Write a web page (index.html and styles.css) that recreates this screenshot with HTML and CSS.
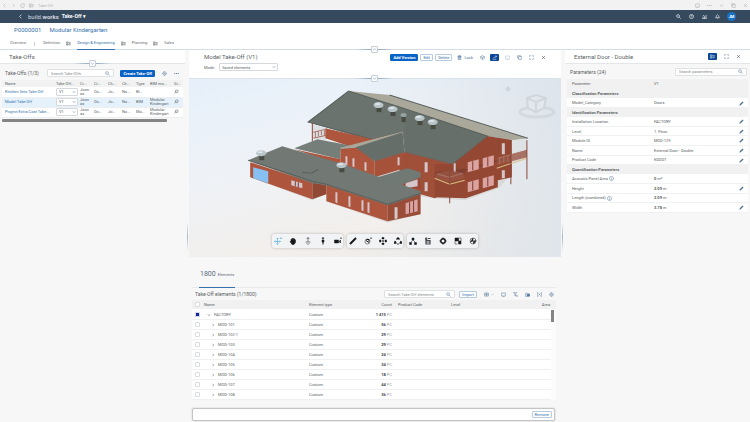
FILE: index.html
```html
<!DOCTYPE html>
<html lang="en">
<head>
    <meta charset="UTF-8">
    <meta name="viewport" content="width=device-width, initial-scale=1.0">
    <title>Take-Off</title>
    <link rel="stylesheet" href="styles.css">
</head>
<body>
    <svg class="sprite" aria-hidden="true">
        <symbol id="i-search" viewBox="0 0 16 16"><circle cx="6.500" cy="6.500" r="4.500"/><path d="M10 10l5 5"/></symbol>
        <symbol id="i-down" viewBox="0 0 16 16"><path d="M3 5l5 6 5-6"/></symbol>
        <symbol id="i-up" viewBox="0 0 16 16"><path d="M3 11l5-6 5 6"/></symbol>
        <symbol id="i-left" viewBox="0 0 16 16"><path d="M11 2L5 8l6 6"/></symbol>
        <symbol id="i-right" viewBox="0 0 16 16"><path d="M6 3l5 5-5 5"/></symbol>
        <symbol id="i-close" viewBox="0 0 16 16"><path d="M3 3l10 10M13 3L3 13"/></symbol>
        <symbol id="i-gear" viewBox="0 0 16 16"><circle cx="8" cy="8" r="5.500"/><circle cx="8" cy="8" r="2"/><path d="M8 1v2M8 13v2M1 8h2M13 8h2"/></symbol>
        <symbol id="i-more" viewBox="0 0 16 16"><path d="M1 8h3M6.500 8h3M12 8h3" stroke-width="3"/></symbol>
        <symbol id="i-help" viewBox="0 0 16 16"><circle cx="8" cy="8" r="6.500"/><path d="M6 6q2-3 4 0q0 1-2 3M8 11v1"/></symbol>
        <symbol id="i-chart" viewBox="0 0 16 16"><path d="M3 9v5M8 7v7M13 3v11M1 14h14M3 6l4-2"/></symbol>
        <symbol id="i-bell" viewBox="0 0 16 16"><path d="M2 12h12l-2-3V6q-4-7-8 0v3zM7 14h2"/></symbol>
        <symbol id="i-pencil" viewBox="0 0 16 16"><path d="M3 13L13 3" stroke-width="4"/><path d="M1 15l3-1"/></symbol>
        <symbol id="i-pin" viewBox="0 0 16 16"><path d="M2 14l4-5M4 7l5 5 2-1v-2l3-3-4-4-3 3H5z"/></symbol>
        <symbol id="i-trash" viewBox="0 0 16 16"><path d="M4 4h8v10H4zM2 4h12M6 2h4M7 7v4M9 7v4"/></symbol>
        <symbol id="i-cube" viewBox="0 0 16 16"><path d="M2 5l6-3 6 3v6l-6 3-6-3zM2 5l6 3 6-3M8 8v6"/></symbol>
        <symbol id="i-screen" viewBox="0 0 16 16"><path d="M2 3h12v10H2zM5 15h6"/></symbol>
        <symbol id="i-copy" viewBox="0 0 16 16"><path d="M5 5h9v9H5zM5 10H2V2h9v3"/></symbol>
        <symbol id="i-full" viewBox="0 0 16 16"><path d="M2 6V2h4M10 2h4v4M14 10v4h-4M6 14H2v-4"/></symbol>
        <symbol id="i-link" viewBox="0 0 16 16"><path d="M2 14h12M3 11l4-4 3 2 4-6M10 3h4v4"/></symbol>
        <symbol id="i-list" viewBox="0 0 16 16"><path d="M1 3h6v4H1zM1 10h6v3H1zM9 5h6M9 9h6M9 12h6"/></symbol>
        <symbol id="i-grid" viewBox="0 0 16 16"><path d="M2 3h12v10H2zM2 8h12M8 3v10"/></symbol>
        <symbol id="i-filter" viewBox="0 0 16 16"><path d="M1 2h11L8 7v6l-2-2V7zM10 10l5 5M15 10l-5 5"/></symbol>
        <symbol id="i-export" viewBox="0 0 16 16"><path d="M2 4h5l2 2h5v8H2z"/><path d="M7 7h7v6H7z" fill="currentColor"/></symbol>
        <symbol id="i-sum" viewBox="0 0 16 16"><path d="M4 2H1v12h3M12 2h3v12h-3M5 5l6 6M11 5l-6 6"/></symbol>
        <symbol id="i-info" viewBox="0 0 16 16"><circle cx="8" cy="8" r="6.500"/><path d="M8 7v5M8 4v1"/></symbol>
        <symbol id="i-reload" viewBox="0 0 16 16"><path d="M14 8a6 6 0 1 1-2-4l2 2V2"/></symbol>
        <symbol id="i-orbit" viewBox="0 0 16 16"><path d="M7 2v13M1 9h12M5 4l2-2 2 2M5 13l2 2 2-2M3 7L1 9l2 2M11 7l2 2-2 2"/><path d="M14 1v3" stroke-width="2"/></symbol>
        <symbol id="i-hand" viewBox="0 0 16 16"><path d="M4 8V4l2 2V2l2 3V2l2 3V3l3 3v5l-3 4H6L2 9z" fill="currentColor"/></symbol>
        <symbol id="i-updown" viewBox="0 0 16 16"><path d="M8 1v9M5 4l3-3 3 3M3 10h10M5 12l3 3 3-3"/></symbol>
        <symbol id="i-walk" viewBox="0 0 16 16"><circle cx="8" cy="2.500" r="1.500" fill="currentColor"/><path d="M8 5v6M6 6h4v4H6zM7 10v5M9 10v5" fill="currentColor"/></symbol>
        <symbol id="i-camera" viewBox="0 0 16 16"><path d="M1 6h8v6H1zM10 9l3-3v6z" fill="currentColor"/><path d="M14 1v3" stroke-width="2"/></symbol>
        <symbol id="i-ruler" viewBox="0 0 16 16"><path d="M2 14L14 2" stroke-width="4"/></symbol>
        <symbol id="i-paint" viewBox="0 0 16 16"><circle cx="7" cy="9" r="5"/><path d="M4 7l6 4M5 5h5v4" stroke-width="2"/><path d="M14 1v3" stroke-width="2"/></symbol>
        <symbol id="i-explode" viewBox="0 0 16 16"><path d="M6 1h4v3H6zM6 12h4v3H6zM1 6h3v4H1zM12 6h3v4h-3zM7 7h2v2H7z" fill="currentColor"/></symbol>
        <symbol id="i-section" viewBox="0 0 16 16"><path d="M5 5l3-3 3 3M3 8l-2 4h4M13 8l2 4h-4M7 14h2" stroke-width="3"/></symbol>
        <symbol id="i-tree" viewBox="0 0 16 16"><path d="M6 2h4v4H6zM1 11h4v4H1zM11 11h4v4h-4z" fill="currentColor"/><path d="M8 6l-5 5M8 6l5 5"/></symbol>
        <symbol id="i-levels" viewBox="0 0 16 16"><path d="M3 2h3v3H3zM8 3h5M3 7h10M3 10h10M3 14h10M4 7v7M12 7v7" stroke-width="1.500"/></symbol>
        <symbol id="i-cog" viewBox="0 0 16 16"><circle cx="8" cy="8" r="4.500" stroke-width="3"/><path d="M8 1v2M8 13v2M1 8h2M13 8h2" stroke-width="2"/></symbol>
        <symbol id="i-boxes" viewBox="0 0 16 16"><path d="M2 2h7v6H2zM9 8h5v6H9z" fill="currentColor"/><path d="M9 2h5v6M7 14H2V8"/></symbol>
        <symbol id="i-globe" viewBox="0 0 16 16"><circle cx="8" cy="8" r="6"/><path d="M8 2L3 10l5-2zM9 8l5-1-5 7z" fill="currentColor"/></symbol>
    </svg>

    <div class="browser-bar">
        <svg><use href="#i-left"/></svg>
        <svg><use href="#i-right"/></svg>
        <svg><use href="#i-reload"/></svg>
        <svg><use href="#i-list"/></svg>
        <span>Take-Off</span>
        <div class="window-icons">
            <svg><use href="#i-screen"/></svg>
            <svg><use href="#i-more"/></svg>
            <svg><use href="#i-down"/></svg>
            <svg><use href="#i-copy"/></svg>
            <svg><use href="#i-close"/></svg>
        </div>
    </div>

    <header class="shell">
        <button class="icon" aria-label="Back"><svg><use href="#i-left"/></svg></button>
        <span class="brand">build.<b>works</b></span>
        <button class="app-name">Take-Off <span>▾</span></button>
        <div class="shell-icons">
            <button class="icon" aria-label="Search"><svg><use href="#i-search"/></svg></button>
            <button class="icon" aria-label="Help"><svg><use href="#i-help"/></svg></button>
            <button class="icon" aria-label="Reports"><svg><use href="#i-chart"/></svg></button>
            <button class="icon" aria-label="Notifications"><svg><use href="#i-bell"/></svg></button>
            <button class="avatar">JM</button>
        </div>
    </header>

    <div class="project">
        <h1><a href="#">P0000001</a><a href="#">Modular Kindergarten</a></h1>
        <nav>
            <a href="#">Overview</a>
            <i></i>
            <a href="#">Definition</a>
            <svg><use href="#i-list"/></svg>
            <a href="#" class="active">Design &amp; Engineering</a>
            <svg><use href="#i-list"/></svg>
            <a href="#">Planning</a>
            <svg><use href="#i-list"/></svg>
            <a href="#">Sales</a>
        </nav>
        <button class="fold" aria-label="Collapse header"><svg><use href="#i-up"/></svg></button>
    </div>

    <main>
        <section class="takeoffs">
            <div class="panel-head">
                <h2>Take-Offs</h2>
                <button class="fold" aria-label="Expand"><svg><use href="#i-down"/></svg></button>
            </div>
            <div class="toolbar">
                <h3>Take-Offs (1/3)</h3>
                <label class="search"><input type="text" placeholder="Search Take-Offs" aria-label="Search Take-Offs"><svg><use href="#i-search"/></svg></label>
                <button class="btn primary">Create Take-Off</button>
                <button class="icon" aria-label="Settings"><svg><use href="#i-gear"/></svg></button>
                <button class="icon" aria-label="More"><svg><use href="#i-more"/></svg></button>
            </div>
            <table class="takeoff-table">
                <thead>
                    <tr><th class="c-name">Name</th><th class="c-version">Take-Off…</th><th>Cr…</th><th>Cr…</th><th>Ch…</th><th>Ch…</th><th>Type</th><th class="c-model">BIM mo…</th><th class="c-pin">St…</th></tr>
                </thead>
                <tbody>
                    <tr>
                        <td><a href="#">Kitchen Sets Take-Off</a></td>
                        <td><span class="drop"><select aria-label="Version"><option>V1</option></select><svg><use href="#i-down"/></svg></span></td>
                        <td>Joon as</td><td>Oc…</td><td>Jo…</td><td>No…</td><td>BI…</td><td></td>
                        <td><svg><use href="#i-pin"/></svg></td>
                    </tr>
                    <tr class="selected">
                        <td><a href="#">Model Take-Off</a></td>
                        <td><span class="drop"><select aria-label="Version"><option>V1</option></select><svg><use href="#i-down"/></svg></span></td>
                        <td>Joon as</td><td>Oc…</td><td>Jo…</td><td>No…</td><td>BIM</td><td>Modular Kindergart</td>
                        <td><svg><use href="#i-pin"/></svg></td>
                    </tr>
                    <tr>
                        <td><a href="#">Project Extra Cost Take…</a></td>
                        <td><span class="drop"><select aria-label="Version"><option>V1</option></select><svg><use href="#i-down"/></svg></span></td>
                        <td>Joon as</td><td>Oc…</td><td>Jo…</td><td>No…</td><td>Ma…</td><td>Modular Kindergart</td>
                        <td><svg><use href="#i-pin"/></svg></td>
                    </tr>
                </tbody>
            </table>
            <div class="hscroll"></div>
        </section>

        <section class="model">
            <div class="model-head">
                <div class="title-row">
                    <h2>Model Take-Off (V1)</h2>
                    <div class="actions">
                        <button class="btn primary">Add Version</button>
                        <button class="btn">Edit</button>
                        <button class="btn">Delete</button>
                        <button class="lock"><svg><use href="#i-trash"/></svg> Lock</button>
                        <button class="icon" aria-label="Model"><svg><use href="#i-cube"/></svg></button>
                        <button class="icon on" aria-label="Link"><svg><use href="#i-link"/></svg></button>
                        <button class="icon pale" aria-label="Screen"><svg><use href="#i-screen"/></svg></button>
                        <button class="icon" aria-label="Copy"><svg><use href="#i-copy"/></svg></button>
                        <button class="icon" aria-label="Full screen"><svg><use href="#i-full"/></svg></button>
                        <button class="icon dark" aria-label="Close"><svg><use href="#i-close"/></svg></button>
                    </div>
                </div>
                <div class="mode-row">
                    <label for="mode">Mode:</label>
                    <span class="drop"><select id="mode"><option>Saved elements</option></select><svg><use href="#i-down"/></svg></span>
                </div>
                <button class="fold" aria-label="Expand"><svg><use href="#i-down"/></svg></button>
            </div>

            <div class="viewer">
                <svg class="building" viewBox="190 79 371 178" preserveAspectRatio="xMidYMid meet">
                    <!-- ground shadow -->
                    <path class="shade" d="M251 177l62 23 14-7v8l61 21 32-8v-18l15 2 30 2 34-12 14-16-100-20-160 10z"/>

                    <!-- main roof -->
                    <path fill="#aaa89b" d="M349 91l41 4 138 43-16 1-25-2-87-29z"/>
                    <path fill="#6a736e" d="M349 91l51 16 88 29-35 28-48-12-2-20-32 8-63-18z"/>
                    <path fill="#5f6762" d="M405 112v40l48 12 35-28-84-27z" opacity=".3"/>
                    <path class="edge" d="M349 91l-40 31 64 17M349 91l51 16 88 29-35 28-48-12M390 95l138 43"/>

                    <!-- upper left balcony -->
                    <path fill="#dde1e5" d="M313 124l14 4v12l-14-2z"/>
                    <path class="rail" d="M314 132l13-3M314 138l13-3M316 132v5M319 131v5M322 130v5M325 130v5"/>
                    <path class="post" d="M313 123v18"/>
                    <path fill="#ad563d" d="M326 128l47 11 30-7-50 15-27-9z"/>

                    <!-- middle flat roof -->
                    <path fill="#767e79" d="M295 148l23-9 37 7-14 4v9z"/>
                    <path fill="#ad563d" d="M295 149l46 10v6z"/>

                    <!-- small gable -->
                    <path fill="#ad563d" d="M341 149l17-3 17 15v16l-34-13z"/>
                    <path fill="#a6523b" d="M375 160l30-9v17l-30 9z"/>
                    <path fill="#aaa89b" d="M341 148l62-16-47 15z" stroke="#aaa89b" stroke-width="1"/>
                    <path fill="#666e69" d="M356 147l47-15 2 20-30 9z"/>
                    <path class="glass" d="M346 156h2v9l-2-1zM353 158h2v9l-2-1zM365 162h2v9l-2-1zM398 157h2v8h-2z"/>

                    <!-- courtyard wall and roof -->
                    <path fill="#a04f39" d="M405 152l48 12 1 26-19 8-35-10v-20z"/>
                    <path fill="#717974" d="M378 177l30-9 13 4v12l-14 4z"/>
                    <path fill="#984a36" d="M403 184l18-7v12l-16-3z"/>
                    <path class="glass" d="M406 183l12-4v7l-12 2zM425 162h3v10h-3zM425 182h3v9h-3zM441 165h3v10h-3z"/>

                    <!-- right wing -->
                    <path fill="#944733" d="M453 164l35-28 24 3v38l-14 3v7l-32 11-31-1v-33z"/>
                    <path fill="#aaa89b" d="M488 136l24 2 16 0-16 2z"/>
                    <path class="belt" d="M465 170l47-14"/>
                    <path fill="#80402f" d="M435 172l30-4v6l-30 4z"/>
                    <path class="glass pink" d="M468 162l11-3v10l-11 3zM483 158l11-3v10l-11 3zM468 182l11-3v10l-11 3zM483 178l11-3v10l-11 3z"/>
                    <path class="glass" d="M502 143h3v11h-3zM454 163h2v9h-2zM502 170h3v8h-3z"/>
                    <path class="frame" d="M473 161v9M488 157v9M473 181v9M488 177v9"/>
                    <path fill="#dfe2e5" d="M512 140l15-1v20l-15 3z"/>
                    <path fill="#9a5544" d="M497 158l30-8v7l-30 8zM435 177l15 5 14-4v-5l-14-3-14 3z" opacity=".8"/>
                    <path class="rail" d="M498 158l29-8M500 158v6M504 157v6M508 156v6M512 155v6M516 154v6M520 153v6M524 152v6M438 174l12 3 13-4"/>
                    <path class="deck" d="M497 168l30-10M435 178l15 6 15-4"/>
                    <path class="post" d="M450 164v39M511 140v44M527 140v39"/>

                    <!-- front block -->
                    <path fill="#ad563d" d="M251 162l62 20v17l-62-22z"/>
                    <path fill="#914835" d="M313 181l14 4v9l-14 5z"/>
                    <path fill="#ad563d" d="M327 184l61 20v17l-61-20z"/>
                    <path fill="#994c37" d="M388 204l33-12v22l-33 7z"/>
                    <path fill="#727975" d="M249 160l34-14 58 17 37 13 43 15v3l-33 11-61-20-14-2z"/>
                    <path class="edge" d="M249 160l64 21 14 3 61 20 33-11M303 172l9 1 7-4"/>
                    <path fill="#87c0f2" d="M254 167l15 4v12l-15-5z"/>
                    <path class="glass" d="M292 180l11 3v5l-11-3zM336 192h2v11l-2-1zM349 196h2v11l-2-1zM362 200h2v11l-2-1zM368 202h2v11l-2-1zM395 207h3v11l-3 1z"/>
                    <path class="glass pink" d="M406 203l12-4v12l-12 3z"/>
                    <path class="frame" d="M296 181v5M299 182v5M410 202v11M414 200v12"/>

                    <!-- roof vents -->
                    <g id="vent"><path fill="#484b42" d="M377 106h5v6h-5z"/><ellipse cx="379" cy="105" rx="5" ry="3" fill="#b9c4c9"/><ellipse cx="378" cy="104" rx="3" ry="1" fill="#dfe6ea"/></g>
                    <use href="#vent" x="14" y="4"/>
                    <use href="#vent" x="41" y="13"/>
                    <use href="#vent" x="54" y="17"/>
                    <use href="#vent" x="-117" y="48"/>
                    <use href="#vent" x="-37" y="60"/>
                    <path fill="#484b42" d="M402 116h4v6h-4z"/><ellipse cx="404" cy="115" rx="3" ry="2" fill="#97a3a3"/>

                    <!-- view cube -->
                    <ellipse cx="537" cy="112" rx="17" ry="5" fill="none" stroke="#d3d9df" stroke-width="3"/>
                    <path fill="#e4e8ec" stroke="#d0d6dc" d="M527 98l9-3 10 3-2 10-8 4-8-4zM527 98l9 4 10-4M536 102v9"/>
                    <path d="M508 86l3 3-3 3-3-3z" fill="#ced6dd"/>
                </svg>
                <div class="viewer-tools">
                    <div class="tool-group">
                        <button class="icon current" aria-label="Orbit"><svg><use href="#i-orbit"/></svg></button>
                        <button class="icon" aria-label="Pan"><svg><use href="#i-hand"/></svg></button>
                        <button class="icon" aria-label="Zoom"><svg><use href="#i-updown"/></svg></button>
                        <button class="icon" aria-label="First person"><svg><use href="#i-walk"/></svg></button>
                        <button class="icon" aria-label="Camera"><svg><use href="#i-camera"/></svg></button>
                    </div>
                    <div class="tool-group">
                        <button class="icon" aria-label="Measure"><svg><use href="#i-ruler"/></svg></button>
                        <button class="icon" aria-label="Section"><svg><use href="#i-paint"/></svg></button>
                        <button class="icon" aria-label="Explode"><svg><use href="#i-explode"/></svg></button>
                        <button class="icon" aria-label="Reset"><svg><use href="#i-section"/></svg></button>
                    </div>
                    <div class="tool-group">
                        <button class="icon" aria-label="Model browser"><svg><use href="#i-tree"/></svg></button>
                        <button class="icon" aria-label="Levels"><svg><use href="#i-levels"/></svg></button>
                        <button class="icon" aria-label="Settings"><svg><use href="#i-cog"/></svg></button>
                        <button class="icon" aria-label="Boxes"><svg><use href="#i-boxes"/></svg></button>
                        <button class="icon" aria-label="Globe"><svg><use href="#i-globe"/></svg></button>
                    </div>
                </div>
            </div>

            <div class="elements">
                <div class="tab-row"><a href="#"><b>1800</b> Elements</a></div>
                <div class="toolbar">
                    <h3>Take-Off elements (1/1800)</h3>
                    <label class="search"><input type="text" placeholder="Search Take-Off elements" aria-label="Search elements"><svg><use href="#i-search"/></svg></label>
                    <button class="btn">Import</button>
                    <div class="table-icons">
                        <button class="icon split" aria-label="View"><svg><use href="#i-grid"/></svg><svg><use href="#i-down"/></svg></button>
                        <button class="icon" aria-label="Screen"><svg><use href="#i-screen"/></svg></button>
                        <button class="icon" aria-label="Clear filter"><svg><use href="#i-filter"/></svg></button>
                        <button class="icon" aria-label="Export"><svg><use href="#i-export"/></svg></button>
                        <button class="icon" aria-label="Totals"><svg><use href="#i-sum"/></svg></button>
                        <button class="icon" aria-label="Settings"><svg><use href="#i-gear"/></svg></button>
                    </div>
                </div>
                <div class="table-wrap">
                    <table class="element-table">
                        <thead>
                            <tr><th class="c-check"><input type="checkbox" aria-label="Select all"></th><th class="c-name">Name</th><th class="c-type">Element type</th><th class="c-count">Count</th><th class="c-code">Product Code</th><th>Level</th><th class="c-area">Area</th></tr>
                        </thead>
                        <tbody id="rows"></tbody>
                    </table>
                    <div class="vscroll"><i></i></div>
                </div>
                <footer><button class="btn">Remove</button></footer>
            </div>
        </section>

        <section class="details">
            <div class="panel-head">
                <h2>External Door - Double</h2>
                <div class="actions">
                    <button class="icon on" aria-label="Details"><svg><use href="#i-list"/></svg></button>
                    <button class="icon" aria-label="Full screen"><svg><use href="#i-full"/></svg></button>
                    <button class="icon dark" aria-label="Close"><svg><use href="#i-close"/></svg></button>
                </div>
            </div>
            <div class="toolbar">
                <h3>Parameters (24)</h3>
                <label class="search"><input type="text" placeholder="Search parameters" aria-label="Search parameters"><svg><use href="#i-search"/></svg></label>
            </div>
            <table class="param-table">
                <thead><tr><th class="c-param">Parameter</th><th>V1</th><th class="c-edit"></th></tr></thead>
                <tbody>
                    <tr class="group"><th colspan="3">Classification Parameters</th></tr>
                    <tr><td>Model_Category</td><td>Doors</td><td><svg><use href="#i-pencil"/></svg></td></tr>
                    <tr class="group"><th colspan="3">Identification Parameters</th></tr>
                    <tr><td>Installation Location</td><td>FACTORY</td><td><svg><use href="#i-pencil"/></svg></td></tr>
                    <tr><td>Level</td><td>1. Floor</td><td><svg><use href="#i-pencil"/></svg></td></tr>
                    <tr><td>Module ID</td><td>MOD-129</td><td><svg><use href="#i-pencil"/></svg></td></tr>
                    <tr><td>Name</td><td>External Door - Double</td><td><svg><use href="#i-pencil"/></svg></td></tr>
                    <tr><td>Product Code</td><td>EDDDT</td><td><svg><use href="#i-pencil"/></svg></td></tr>
                    <tr class="group"><th colspan="3">Quantification Parameters</th></tr>
                    <tr><td>Acoustic Panel Area <svg><use href="#i-info"/></svg></td><td><b>0</b> m²</td><td></td></tr>
                    <tr><td>Height</td><td><b>2.09</b> m</td><td><svg><use href="#i-pencil"/></svg></td></tr>
                    <tr><td>Length (combined) <svg><use href="#i-info"/></svg></td><td><b>2.09</b> m</td><td></td></tr>
                    <tr><td>Width</td><td><b>3.78</b> m</td><td><svg><use href="#i-pencil"/></svg></td></tr>
                </tbody>
            </table>
        </section>
    </main>
    <script src="script.js"></script>
</body>
</html>
```
FILE: styles.css
```css
* {
    box-sizing: border-box;
}
body {
    margin: 0;
    min-height: 100vh;
    display: flex;
    flex-direction: column;
    background: #f7f7f7;
    color: #5a5f64;
    font-family: Roboto, "Liberation Sans", sans-serif;
    font-size: 4px;
    line-height: 5px;
}
.sprite {
    position: absolute;
    width: 0;
    height: 0;
}
svg {
    width: 5px;
    height: 5px;
    fill: none;
    stroke: currentColor;
    stroke-width: 2;
    flex: none;
}
h1, h2, h3 {
    margin: 0;
    font-weight: normal;
}
h2 {
    font-size: 6px;
    line-height: 8px;
}
h3 {
    font-size: 5px;
    line-height: 6px;
}
a {
    color: #3572ab;
    text-decoration: none;
}
button, input, select {
    font: inherit;
    color: inherit;
    margin: 0;
    padding: 0;
    border: none;
    background: none;
}

/* top bars */
.browser-bar {
    height: 10px;
    display: flex;
    align-items: center;
    gap: 4px;
    padding: 0 2px;
    background: #f2f2f2;
    color: #b5b5b5;
}
.window-icons {
    margin-left: auto;
    display: flex;
    gap: 7px;
}
.shell {
    height: 13px;
    display: flex;
    align-items: center;
    padding: 0 14px 0 17px;
    background: #354a5f;
    color: white;
}
.brand {
    margin: 0 3px 0 5px;
    font-size: 6px;
    color: #d5dae0;
}
.app-name {
    font-size: 5px;
    font-weight: bold;
}
.shell-icons {
    margin-left: auto;
    display: flex;
    align-items: center;
    gap: 7px;
}
.avatar {
    width: 9px;
    height: 9px;
    border-radius: 50%;
    background: #1b72c4;
    font-weight: bold;
}
.icon {
    display: flex;
    align-items: center;
    justify-content: center;
    width: 6px;
    height: 7px;
    cursor: pointer;
}
.icon svg {
    stroke-width: 1.5;
}
.shell .icon svg {
    stroke-width: 2;
}

/* project header */
.project {
    position: relative;
    height: 27px;
    background: white;
    border-bottom: 1px solid #d5dde4;
}
.project h1 {
    display: flex;
    gap: 8px;
    padding: 3px 14px;
    font-size: 6px;
    line-height: 8px;
}
.project nav {
    display: flex;
    align-items: center;
    gap: 6px;
    height: 13px;
    padding-left: 10px;
    color: #6a6f73;
}
.project nav a {
    line-height: 12px;
    color: #6a6f73;
    border-bottom: 1px solid transparent;
}
.project nav i {
    height: 4px;
    margin: 0 2px;
    border-left: 1px solid #ccc;
}
.project nav a.active {
    color: #3572ab;
    border-color: #3572ab;
}
.fold {
    position: absolute;
    left: 50%;
    bottom: -4px;
    z-index: 2;
    width: 7px;
    height: 7px;
    margin-left: -4px;
    display: flex;
    align-items: center;
    justify-content: center;
    background: white;
    border: 1px solid #c5ced6;
    border-radius: 1px;
    color: #8ba3ba;
}
.fold::before, .fold::after {
    content: "";
    position: absolute;
    top: 2px;
    width: 16px;
    height: 1px;
}
.fold::before {
    right: 6px;
    background: linear-gradient(to left, #91a9bf, transparent);
}
.fold::after {
    left: 6px;
    background: linear-gradient(to right, #91a9bf, transparent);
}

/* columns */
main {
    flex: 1;
    display: grid;
    grid-template-columns: 185fr 372fr 185fr;
    gap: 4px;
}
.panel-head {
    position: relative;
    height: 14px;
    display: flex;
    align-items: center;
    justify-content: space-between;
    padding: 0 9px;
    background: white;
    border-bottom: 1px solid #e3e7ea;
}
.actions {
    display: flex;
    align-items: center;
    gap: 6px;
    color: #4a7198;
}
.btn {
    height: 7px;
    padding: 0 2px;
    line-height: 5px;
    border: 1px solid #b7cbde;
    border-radius: 1px;
    background: white;
    color: #3572ab;
    cursor: pointer;
}
.primary {
    background: #0a63c4;
    border-color: #0a63c4;
    color: white;
    font-weight: bold;
}
.on {
    width: 9px;
    background: #0b4796;
    border-radius: 1px;
    color: white;
}
.pale {
    opacity: .5;
}
.dark {
    color: #223548;
}
.toolbar {
    display: flex;
    align-items: center;
    gap: 4px;
}
.search {
    display: flex;
    align-items: center;
    height: 8px;
    padding: 0 3px;
    border: 1px solid #dfe2e5;
    border-radius: 1px;
    background: white;
    color: #4a7198;
}
.search svg {
    stroke-width: 1.5;
}
.search input {
    flex: 1;
    min-width: 0;
    height: 6px;
    outline: none;
}
.search input::placeholder {
    color: #85898d;
}
table {
    width: 100%;
    border-collapse: collapse;
    table-layout: fixed;
}
th, td {
    padding: 0;
    text-align: left;
    font-weight: normal;
    white-space: nowrap;
}

/* select with its chevron laid over the right end */
.drop {
    position: relative;
    display: block;
}
.drop select {
    appearance: none;
    display: block;
    width: 100%;
    height: 8px;
    padding-left: 2px;
    border: 1px solid #d5d9dd;
    border-radius: 1px;
    background: white;
}
.drop svg {
    position: absolute;
    top: 2px;
    right: 2px;
    width: 4px;
    height: 4px;
    color: #66809a;
    pointer-events: none;
}

/* take-offs list */
.takeoffs .toolbar {
    height: 14px;
    margin-top: 2px;
    padding: 0 6px 0 5px;
    gap: 6px;
}
.takeoffs .search {
    flex: 1;
    margin-left: 2px;
}
.takeoffs .icon {
    color: #4a7198;
}
.takeoff-table {
    width: calc(100% - 4px);
    margin-left: 2px;
    background: white;
}
.takeoff-table th {
    height: 7px;
    background: #f2f2f2;
}
.takeoff-table td {
    height: 10px;
    line-height: 4px;
    border-bottom: 1px solid #eceeef;
}
.takeoff-table th:first-child, .takeoff-table td:first-child {
    padding-left: 3px;
}
.takeoff-table td:nth-child(3), .takeoff-table td:nth-child(8) {
    white-space: normal;
}
.takeoff-table .c-name {
    width: 54px;
}
.takeoff-table .c-version {
    width: 24px;
}
.takeoff-table .c-model {
    width: 24px;
}
.takeoff-table .c-pin {
    width: 9px;
}
.takeoff-table .drop {
    width: 22px;
}
.selected {
    background: #e5f1fb;
}
.hscroll {
    width: 89%;
    height: 3px;
    margin: 1px 2px;
    border-radius: 1px;
    background: #858585;
}

/* model */
.model {
    position: relative;
    display: flex;
    flex-direction: column;
}
/* grips of the column splitters */
.model::before, .model::after {
    content: "";
    position: absolute;
    top: 172px;
    width: 1px;
    height: 30px;
    background: linear-gradient(transparent, #a9b8c6, transparent);
}
.model::before {
    left: -2px;
}
.model::after {
    right: -2px;
}
.model-head {
    position: relative;
    height: 29px;
    padding: 3px 15px 0;
    background: white;
    border-bottom: 1px solid #dbe3ea;
}
.title-row {
    display: flex;
    align-items: center;
    justify-content: space-between;
    height: 8px;
}
.title-row .btn {
    margin-right: -4px;
}
.title-row .on {
    margin: 0 -1px;
}
.title-row .lock {
    display: flex;
    align-items: center;
    gap: 2px;
    margin-left: 3px;
}
.mode-row {
    display: flex;
    align-items: center;
    gap: 4px;
    margin-top: 2px;
}
.mode-row .drop {
    width: 59px;
}
.viewer {
    position: relative;
    background: linear-gradient(165deg, #e6f0fa 0%, #eef2f7 35%, #f2efec 70%, #ebeae9 100%);
}
.viewer::before {
    content: "";
    position: absolute;
    inset: 0;
    background: linear-gradient(80deg, transparent 50%, #dde4eb 100%);
}
.building {
    position: relative;
    display: block;
    width: 100%;
    height: auto;
    stroke: none;
}
.shade {
    fill: #dad9da;
}
.edge {
    fill: none;
    stroke: #5a625d;
    stroke-width: 1;
}
.glass {
    fill: #d4c6cb;
}
.pink {
    fill: #dba3a0;
}
.frame {
    stroke: #7d3b33;
    stroke-width: 1;
}
.belt {
    stroke: #743d30;
    stroke-width: 1;
}
.rail {
    fill: none;
    stroke: #a87567;
    stroke-width: 1;
}
.post {
    stroke: #8b4a38;
    stroke-width: 1;
}
.deck {
    fill: none;
    stroke: #d8c283;
    stroke-width: 1;
}
.viewer-tools {
    position: absolute;
    left: 0;
    right: 0;
    bottom: 9px;
    display: flex;
    justify-content: center;
    gap: 4px;
}
.tool-group {
    display: flex;
    align-items: center;
    gap: 6px;
    height: 14px;
    padding: 0 1px;
    background: #f1f3f5;
    border-radius: 2px;
    box-shadow: 0 0 3px rgba(0, 0, 0, .25);
    color: #16191c;
}
.tool-group .icon {
    width: 9px;
    height: 8px;
}
.tool-group svg {
    width: 8px;
    height: 8px;
    stroke-width: 1;
}
.tool-group .current {
    color: #2c9ad8;
}

/* elements */
.elements {
    padding: 0 5px 0 3px;
}
.tab-row {
    height: 31px;
    padding-top: 11px;
    padding-left: 7px;
    border-bottom: 1px solid #e8eaec;
}
.tab-row a {
    display: inline-flex;
    align-items: center;
    gap: 2px;
    height: 20px;
    padding: 0 1px 6px;
    border-bottom: 1px solid #3572ab;
    color: #5a6b7b;
}
.tab-row b {
    font-size: 7px;
    font-weight: normal;
}
.elements .toolbar {
    height: 12px;
    padding: 0 2px 0 3px;
}
.elements .search {
    width: 71px;
    margin-left: auto;
}
.table-icons {
    display: flex;
    gap: 6px;
    margin-left: 2px;
    color: #4a7198;
}
.split {
    width: 11px;
    gap: 2px;
}
.split svg:last-child {
    width: 3px;
}
.table-wrap {
    display: flex;
    background: white;
}
.element-table th {
    height: 9px;
    background: #f1f1f1;
}
.element-table td {
    height: 10px;
    border-bottom: 1px solid #eff0f1;
}
.element-table .c-check {
    width: 12px;
}
.element-table .c-type {
    width: 60px;
}
.element-table .c-name {
    width: 105px;
}
.element-table .c-count {
    width: 23px;
}
.element-table .c-code {
    width: 59px;
}
.element-table th.c-code {
    padding-left: 6px;
}
.element-table .c-count, .element-table .c-area {
    text-align: right;
}
.element-table .c-area {
    padding-right: 1px;
}
.element-table b {
    color: #3b4045;
    font-weight: bold;
}
.element-table .c-count span {
    color: #999;
}
.element-table .c-name svg {
    width: 4px;
    height: 4px;
    margin-right: 3px;
    vertical-align: middle;
}
.element-table td.c-name {
    padding-left: 7px;
}
.element-table tr.root .c-name {
    padding-left: 3px;
}
input[type=checkbox] {
    appearance: none;
    display: block;
    width: 5px;
    height: 5px;
    margin-left: 3px;
    border: 1px solid #d8dde2;
    border-radius: 1px;
    background: white;
}
input[type=checkbox]:checked {
    background: #10279b;
}
.vscroll {
    width: 5px;
    padding-top: 10px;
    background: linear-gradient(#f1f1f1 9px, #fcfcfc 9px);
}
.vscroll i {
    display: block;
    width: 3px;
    height: 12px;
    background: #858585;
}
.elements footer {
    display: flex;
    justify-content: flex-end;
    align-items: center;
    height: 13px;
    margin: 8px 1px 0 0;
    padding: 0 2px;
    background: white;
    border: 1px solid #c2c4c6;
    border-radius: 2px;
    box-shadow: 0 0 2px rgba(0, 0, 0, .2);
}

/* details */
.details .toolbar {
    justify-content: space-between;
    height: 15px;
    padding: 0 3px 0 5px;
}
.details .search {
    width: 72px;
}
.param-table {
    width: calc(100% - 4px);
    height: 134px;
    margin-left: 2px;
    background: white;
}
.param-table tr {
    border-bottom: 1px solid #f0f1f2;
}
.param-table thead th {
    height: 10px;
}
.param-table th:first-child, .param-table td:first-child {
    padding-left: 5px;
}
.param-table thead, .param-table .group {
    background: #f1f1f1;
}
.param-table .group th {
    font-weight: bold;
}
.param-table .c-param {
    width: 48%;
}
.param-table .c-edit {
    width: 9px;
}
.param-table svg {
    display: inline-block;
    vertical-align: middle;
    color: #4a7198;
    stroke-width: 1.5;
}
```
FILE: script.js
```js
const rows = [
    ["FACTORY", "1 415"],
    ["MOD-101", "56"],
    ["MOD-102-1", "29"],
    ["MOD-103", "29"],
    ["MOD-104", "24"],
    ["MOD-105", "34"],
    ["MOD-106", "18"],
    ["MOD-107", "44"],
    ["MOD-108", "36"]
];

document.getElementById("rows").innerHTML = rows.map(([name, count], i) => `
    <tr class="${i === 0 ? "root" : ""}">
        <td class="c-check"><input type="checkbox" aria-label="${name}" ${i === 0 ? "checked" : ""}></td>
        <td class="c-name"><svg><use href="#${i === 0 ? "i-down" : "i-right"}"/></svg>${name}</td>
        <td>Custom</td>
        <td class="c-count"><b>${count}</b> <span>PC</span></td>
        <td></td><td></td><td></td>
    </tr>`).join("");
```
